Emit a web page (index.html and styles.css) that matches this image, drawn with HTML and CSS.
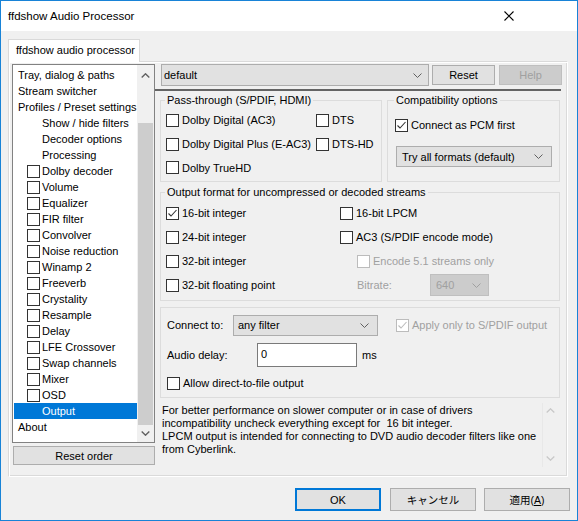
FILE: index.html
```html
<!DOCTYPE html>
<html>
<head>
<meta charset="utf-8">
<link rel="stylesheet" href="styles.css">
</head>
<body>
<div class="window">
  <div class="titlebar">
    <span class="title">ffdshow Audio Processor</span>
    <svg class="close" viewBox="0 0 10 10"><path d="M0.5 0.5L9.5 9.5M9.5 0.5L0.5 9.5" stroke="#000" stroke-width="1.1" fill="none"/></svg>
  </div>
  <div class="client">
    <div class="tabs"><div class="tab">ffdshow audio processor</div></div>
    <div class="page">
      <div class="left">
        <div class="tree">
          <ul class="list">
            <li class="top">Tray, dialog &amp; paths</li>
            <li class="top">Stream switcher</li>
            <li class="top">Profiles / Preset settings</li>
            <li class="child">Show / hide filters</li>
            <li class="child">Decoder options</li>
            <li class="child">Processing</li>
            <li class="filt"><span class="box"></span>Dolby decoder</li>
            <li class="filt"><span class="box"></span>Volume</li>
            <li class="filt"><span class="box"></span>Equalizer</li>
            <li class="filt"><span class="box"></span>FIR filter</li>
            <li class="filt"><span class="box"></span>Convolver</li>
            <li class="filt"><span class="box"></span>Noise reduction</li>
            <li class="filt"><span class="box"></span>Winamp 2</li>
            <li class="filt"><span class="box"></span>Freeverb</li>
            <li class="filt"><span class="box"></span>Crystality</li>
            <li class="filt"><span class="box"></span>Resample</li>
            <li class="filt"><span class="box"></span>Delay</li>
            <li class="filt"><span class="box"></span>LFE Crossover</li>
            <li class="filt"><span class="box"></span>Swap channels</li>
            <li class="filt"><span class="box"></span>Mixer</li>
            <li class="filt"><span class="box"></span>OSD</li>
            <li class="child sel">Output</li>
            <li class="top">About</li>
          </ul>
          <div class="vscroll">
            <div class="arrow up"><svg viewBox="0 0 9 5"><polyline points="0.7,4.5 4.5,0.8 8.3,4.5" stroke="#606060" stroke-width="1.4" fill="none"/></svg></div>
            <div class="track"></div>
            <div class="thumb"></div>
            <div class="arrow"><svg viewBox="0 0 9 5"><polyline points="0.7,0.5 4.5,4.2 8.3,0.5" stroke="#606060" stroke-width="1.4" fill="none"/></svg></div>
          </div>
        </div>
        <div class="btn reset-order">Reset order</div>
      </div>

      <div class="right">
        <div class="toprow">
          <div class="combo preset"><span>default</span><svg class="chev" viewBox="0 0 9 5"><polyline points="0.5,0.5 4.5,4.5 8.5,0.5" stroke="#606060" fill="none"/></svg></div>
          <div class="btn reset">Reset</div>
          <div class="btn help disabled">Help</div>
        </div>
        <div class="sep"></div>

        <div class="row2">
          <fieldset class="group pass">
            <legend>Pass-through (S/PDIF, HDMI)</legend>
            <div class="passgrid">
              <div class="cb"><span class="box"></span>Dolby Digital (AC3)</div>
              <div class="cb"><span class="box"></span>DTS</div>
              <div class="cb"><span class="box"></span>Dolby Digital Plus (E-AC3)</div>
              <div class="cb"><span class="box"></span>DTS-HD</div>
              <div class="cb"><span class="box"></span>Dolby TrueHD</div>
            </div>
          </fieldset>
          <fieldset class="group compat">
            <legend>Compatibility options</legend>
            <div class="cb pcm"><span class="box"><svg viewBox="0 0 11 11"><polyline points="1.5,5.5 4,8 9.5,2" stroke="#333" stroke-width="1.1" fill="none"/></svg></span>Connect as PCM first</div>
            <div class="combo formats"><span>Try all formats (default)</span><svg class="chev" viewBox="0 0 9 5"><polyline points="0.5,0.5 4.5,4.5 8.5,0.5" stroke="#606060" fill="none"/></svg></div>
          </fieldset>
        </div>

        <fieldset class="group output">
          <legend>Output format for uncompressed or decoded streams</legend>
          <div class="outgrid">
            <div class="cb"><span class="box"><svg viewBox="0 0 11 11"><polyline points="1.5,5.5 4,8 9.5,2" stroke="#333" stroke-width="1.1" fill="none"/></svg></span>16-bit integer</div>
            <div class="cb"><span class="box"></span>16-bit LPCM</div>
            <div class="cb"><span class="box"></span>24-bit integer</div>
            <div class="cb"><span class="box"></span>AC3 (S/PDIF encode mode)</div>
            <div class="cb"><span class="box"></span>32-bit integer</div>
            <div class="cb indent disabled"><span class="box"></span>Encode 5.1 streams only</div>
            <div class="cb"><span class="box"></span>32-bit floating point</div>
            <div class="bitrate indent disabled"><span class="bitlabel">Bitrate:</span><div class="combo dis"><span>640</span><svg class="chev" viewBox="0 0 9 5"><polyline points="0.5,0.5 4.5,4.5 8.5,0.5" stroke="#a0a0a0" fill="none"/></svg></div></div>
          </div>
        </fieldset>

        <fieldset class="group connect">
          <div class="crow">
            <span class="clabel">Connect to:</span>
            <div class="combo anyf"><span>any filter</span><svg class="chev" viewBox="0 0 9 5"><polyline points="0.5,0.5 4.5,4.5 8.5,0.5" stroke="#606060" fill="none"/></svg></div>
            <div class="cb disabled apply"><span class="box"><svg viewBox="0 0 11 11"><polyline points="1.5,5.5 4,8 9.5,2" stroke="#bcbcbc" stroke-width="1.1" fill="none"/></svg></span>Apply only to S/PDIF output</div>
          </div>
          <div class="drow">
            <span class="dlabel">Audio delay:</span>
            <div class="edit">0</div>
            <span class="ms">ms</span>
          </div>
          <div class="cb allow"><span class="box"></span>Allow direct-to-file output</div>
        </fieldset>

        <div class="info">
          <p class="infotext">For better performance on slower computer or in case of drivers<br>incompatibility uncheck everything except for&nbsp; 16 bit integer.<br>LPCM output is intended for connecting to DVD audio decoder filters like one<br>from Cyberlink.</p>
          <div class="iscroll">
            <svg viewBox="0 0 9 5"><polyline points="0.7,4.5 4.5,0.8 8.3,4.5" stroke="#c8c8c8" stroke-width="1.3" fill="none"/></svg>
            <svg viewBox="0 0 9 5"><polyline points="0.7,0.5 4.5,4.2 8.3,0.5" stroke="#c8c8c8" stroke-width="1.3" fill="none"/></svg>
          </div>
        </div>
      </div>
    </div>

    <div class="buttons">
      <div class="btn dlg ok">OK</div>
      <div class="btn dlg jp">キャンセル</div>
      <div class="btn dlg jp">適用(<u>A</u>)</div>
    </div>
  </div>
</div>
</body>
</html>
```
FILE: styles.css
```css
* { box-sizing: border-box; }
html, body { margin: 0; padding: 0; }
body {
  width: 578px; height: 521px; overflow: hidden;
  font-family: "Liberation Sans", "Noto Sans CJK JP", sans-serif;
  font-size: 11px; color: #000; background: #f0f0f0;
}
.window {
  width: 578px; height: 521px;
  border: 1px solid #1883d7;
  display: flex; flex-direction: column;
  background: #f0f0f0;
}
.titlebar {
  height: 30px; flex: none; background: #fff;
  display: flex; align-items: center;
  padding-left: 7px;
}
.title { flex: 1; line-height: 16px; font-size: 11.5px; }
.close { width: 10px; height: 10px; margin-right: 63px; }

.client { flex: 1; padding: 8px 0 0 7px; display: flex; flex-direction: column; }
.tabs { display: flex; height: 22px; }
.tab {
  width: 132px; height: 23px;
  background: #fff;
  border: 1px solid #d9d9d9; border-bottom: none;
  padding-left: 7px; line-height: 21px; white-space: nowrap;
  position: relative; z-index: 1;
}
.page {
  width: 560px; height: 416px;
  border: 1px solid; border-color: #dadada #fff #fff #dadada;
  box-shadow: inset 1px 1px #fff, inset -1px -1px #dadada;
  padding: 2px 0 0 3px;
  display: flex;
}

/* left tree */
.left { width: 143px; flex: none; display: flex; flex-direction: column; }
.tree {
  height: 379px; border: 1px solid #828282; background: #fff;
  display: flex;
}
.list { list-style: none; margin: 0; padding: 2px 0 0 1px; width: 124px; }
.list li { height: 16px; line-height: 16px; white-space: nowrap; display: flex; align-items: center; }
.list .top { padding-left: 4px; }
.list .child { padding-left: 28px; }
.list .filt { padding-left: 13px; }
.list .filt .box { margin-right: 2px; }
.list .sel { background: #0078d7; color: #fff; }
.vscroll { width: 17px; display: flex; flex-direction: column; background: #f0f0f0; }
.vscroll .arrow { height: 17px; display: flex; align-items: center; justify-content: center; }
.vscroll .arrow.up { padding-top: 4px; }
.vscroll .arrow svg { width: 9px; height: 5px; }
.vscroll .track { height: 41px; }
.vscroll .thumb { height: 302px; background: #cdcdcd; margin: 0 1px; }

.btn {
  background: #e1e1e1; border: 1px solid #adadad;
  display: flex; align-items: center; justify-content: center;
  line-height: 16px; white-space: nowrap;
}
.btn.disabled { background: #cccccc; border-color: #bfbfbf; color: #a0a0a0; }
.reset-order { margin-top: 3px; height: 19px; margin-left: 1px; width: 142px; }

/* right */
.right { flex: 1; padding-left: 5px; display: flex; flex-direction: column; }
.toprow { height: 22px; display: flex; align-items: center; }
.combo {
  background: #e1e1e1; border: 1px solid #adadad;
  display: flex; align-items: center; justify-content: space-between;
  padding: 0 6px 0 4px; line-height: 16px; white-space: nowrap;
}
.combo .chev { width: 9px; height: 5px; }
.combo.dis { background: #cccccc; border-color: #bfbfbf; color: #a0a0a0; }
.preset { width: 268px; height: 22px; margin-left: 1px; padding-left: 2px; }
.reset { width: 63px; height: 20px; margin-left: 3px; }
.help { width: 63px; height: 20px; margin-left: 4px; }
.sep { margin-top: 3px; height: 2px; width: 406px; margin-left: -5px; background: #646464; }

.group {
  margin: 0; padding: 0; min-width: 0;
  border: 1px solid #dcdcdc;
}
.group legend { padding: 0 2px; margin-left: 4px; line-height: 14px; white-space: nowrap; }
.row2 { display: flex; margin-top: 2px; gap: 5px; }
.pass { width: 222px; height: 89px; }
.compat { width: 173px; height: 89px; }
.compat legend { margin-left: 6px; }
.passgrid {
  display: grid; grid-template-columns: 150px 1fr;
  grid-template-rows: 24px 24px 23px;
  margin-top: 1px; padding-left: 5px;
}
.cb { display: flex; align-items: center; white-space: nowrap; line-height: 16px; }
.box {
  width: 13px; height: 13px; flex: none;
  border: 1px solid #333; background: #fff;
  display: inline-flex; margin-right: 3px;
}
.box svg { width: 11px; height: 11px; }
.disabled .box { border-color: #bcbcbc; }
.disabled { color: #a0a0a0; }
.pcm { height: 24px; margin-top: 6px; margin-left: 7px; }
.formats { width: 156px; height: 21px; margin-top: 9px; margin-left: 8px; padding-left: 5px; padding-right: 8px; }

.output { width: 400px; height: 116px; margin-top: 3px; }
.outgrid {
  display: grid; grid-template-columns: 174px 1fr;
  grid-template-rows: repeat(4, 24px);
  margin-top: 2px; padding-left: 5px;
}
.indent { padding-left: 17px; }
.bitrate { display: flex; align-items: center; }
.bitlabel { width: 73px; }
.bitrate .combo { width: 59px; height: 22px; padding-left: 5px; padding-right: 7px; }

.connect { width: 400px; height: 91px; margin-top: 6px; padding-left: 6px; }
.crow { display: flex; align-items: center; margin-top: 7px; height: 20px; }
.clabel { width: 66px; }
.anyf { width: 145px; height: 21px; padding-left: 4px; padding-right: 8px; }
.apply { margin-left: 18px; }
.drow { display: flex; align-items: center; margin-top: 8px; height: 24px; }
.dlabel { width: 90px; }
.edit { width: 100px; height: 24px; background: #fff; border: 1px solid #7a7a7a; padding: 2px 0 0 3px; line-height: 16px; }
.ms { margin-left: 5px; }
.allow { margin-top: 8px; height: 16px; }

.info { margin-top: 5px; height: 64px; width: 397px; display: flex; }
.infotext { margin: 0; flex: 1; padding: 1px 0 0 2px; line-height: 13px; white-space: nowrap; border-right: 1px solid #e8e8e8; }
.iscroll { width: 14px; display: flex; flex-direction: column; justify-content: space-between; align-items: center; padding: 5px 0 6px; }
.iscroll svg { width: 9px; height: 5px; }

.buttons { display: flex; justify-content: flex-end; margin-top: 11px; padding-right: 7px; }
.dlg { width: 86px; height: 23px; margin-left: 9px; }
.dlg + .dlg + .dlg { margin-left: 8px; }
.jp { font-size: 10.5px; }
.ok { border: 2px solid #0078d7; }
```
